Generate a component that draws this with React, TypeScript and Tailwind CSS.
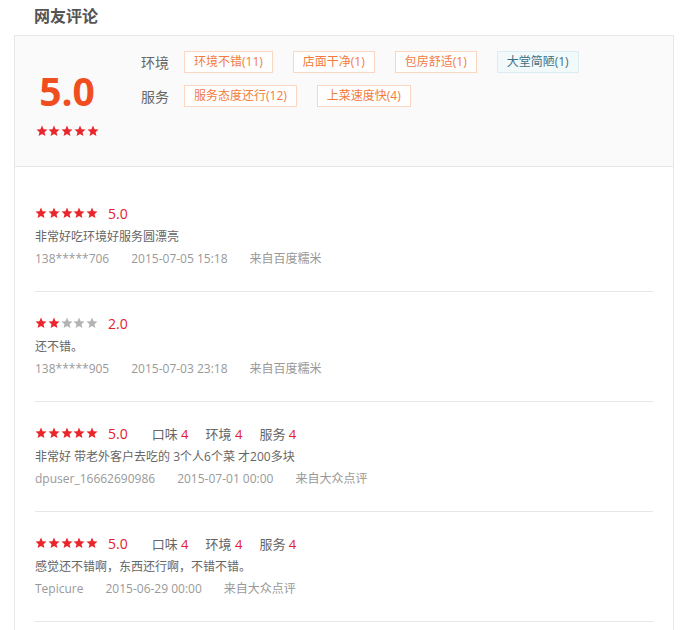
import React from 'react';

const FONT = { fontFamily: '"Open Sans", "Noto Sans CJK SC", sans-serif' };

interface Review {
  rating: number;
  aspects?: { name: string; value: number }[];
  text: string;
  user: string;
  time: string;
  source: string;
}

const reviews: Review[] = [
  { rating: 5, text: '非常好吃环境好服务圆漂亮', user: '138*****706', time: '2015-07-05 15:18', source: '来自百度糯米' },
  { rating: 2, text: '还不错。', user: '138*****905', time: '2015-07-03 23:18', source: '来自百度糯米' },
  {
    rating: 5,
    aspects: [
      { name: '口味', value: 4 },
      { name: '环境', value: 4 },
      { name: '服务', value: 4 },
    ],
    text: '非常好 带老外客户去吃的 3个人6个菜 才200多块',
    user: 'dpuser_16662690986',
    time: '2015-07-01 00:00',
    source: '来自大众点评',
  },
  {
    rating: 5,
    aspects: [
      { name: '口味', value: 4 },
      { name: '环境', value: 4 },
      { name: '服务', value: 4 },
    ],
    text: '感觉还不错啊，东西还行啊，不错不错。',
    user: 'Tepicure',
    time: '2015-06-29 00:00',
    source: '来自大众点评',
  },
];

const tagRows = [
  {
    label: '环境',
    tags: [
      { text: '环境不错(11)', bad: false },
      { text: '店面干净(1)', bad: false },
      { text: '包房舒适(1)', bad: false },
      { text: '大堂简陋(1)', bad: true },
    ],
  },
  {
    label: '服务',
    tags: [
      { text: '服务态度还行(12)', bad: false },
      { text: '上菜速度快(4)', bad: false },
    ],
  },
];

const Star = ({ on }: { on: boolean }) => (
  <svg width="12" height="12" viewBox="0 0 24 24" className={on ? 'text-[#e8262b]' : 'text-[#b3b3b3]'}>
    <path
      fill="currentColor"
      d="M12 1.2l3.1 7.3 7.9.6-6 5.2 1.9 7.7L12 17.8 5.1 22l1.9-7.7-6-5.2 7.9-.6z"
    />
  </svg>
);

const Stars = ({ value }: { value: number }) => (
  <div className="flex gap-[0.75px]">
    {[1, 2, 3, 4, 5].map(i => (
      <Star key={i} on={i <= value} />
    ))}
  </div>
);

export default function App() {
  return (
    <div className="bg-white min-h-[630px] px-[14px]" style={FONT}>
      <h2 className="text-[16px] leading-[32px] font-bold text-[#555] pl-[20px] mb-[3px]">网友评论</h2>

      <div className="w-[660px] border border-[#e6e6e6]">
        {/* 汇总 */}
        <div className="h-[131px] bg-[#fafafa] border-b border-[#e6e6e6] flex pl-[20px]">
          <div className="w-[64px] pt-[35px] flex flex-col items-center">
            <div className="text-[39px] leading-[40px] font-bold text-[#f04e1f]">5.0</div>
            <div className="mt-[14px]">
              <Stars value={5} />
            </div>
          </div>
          <div className="ml-[42px] pt-[15px] flex flex-col gap-[12px]">
            {tagRows.map(row => (
              <div key={row.label} className="flex items-center">
                <span className="w-[43px] text-[14px] text-[#666]">{row.label}</span>
                <div className="flex gap-[20px]">
                  {row.tags.map(t => (
                    <span
                      key={t.text}
                      className={`h-[22px] px-[9px] border text-[12px] leading-[20px] ${
                        t.bad
                          ? 'bg-[#f2f9fb] border-[#dcedf2] text-[#3f6f80]'
                          : 'bg-white border-[#fbd7c2] text-[#f27b3e]'
                      }`}
                    >
                      {t.text}
                    </span>
                  ))}
                </div>
              </div>
            ))}
          </div>
        </div>

        {/* 列表 */}
        <div className="px-5 pt-[15px] pb-[20px]">
          {reviews.map((r, i) => (
            <div key={i} className="pt-[21px] pb-[21px] border-b border-[#e6e6e6]">
              <div className="h-[20px] flex items-center mb-[3px]">
                <Stars value={r.rating} />
                <span className="ml-[10px] text-[14px] text-[#e4212a]">{r.rating.toFixed(1)}</span>
                {r.aspects && (
                  <div className="ml-[24px] mt-[3px] flex gap-[17px] text-[13px] text-[#666]">
                    {r.aspects.map(a => (
                      <span key={a.name}>
                        {a.name} <span className="text-[#e4212a]">{a.value}</span>
                      </span>
                    ))}
                  </div>
                )}
              </div>
              <p className="text-[12px] leading-[22px] text-[#666]">{r.text}</p>
              <div className="flex gap-[22px] text-[12px] leading-[22px] text-[#999]">
                <span>{r.user}</span>
                <span>{r.time}</span>
                <span>{r.source}</span>
              </div>
            </div>
          ))}
        </div>
      </div>
    </div>
  );
}
